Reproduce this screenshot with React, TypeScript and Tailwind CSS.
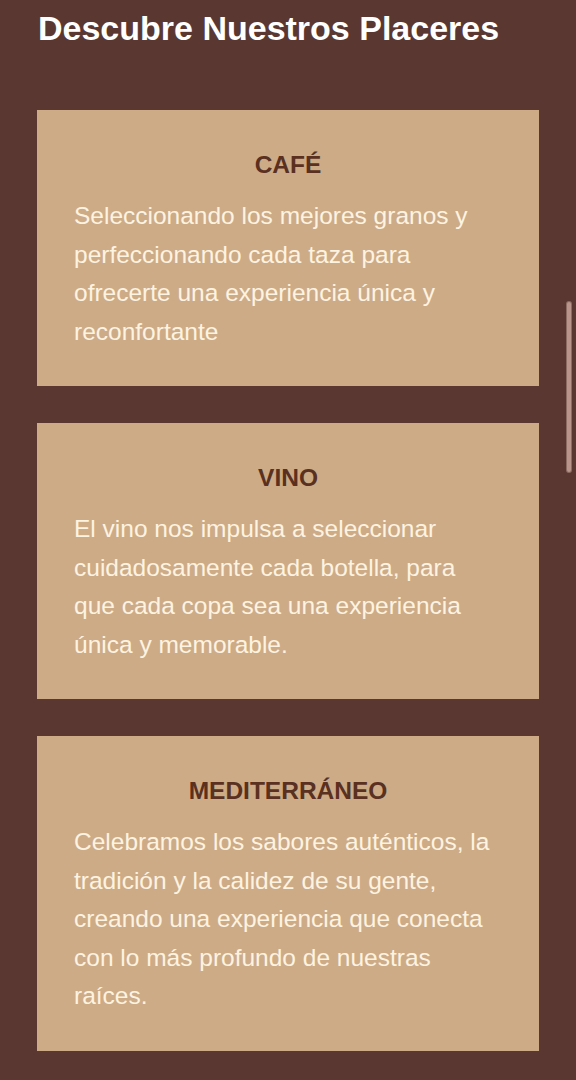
import React from 'react';

interface Placer {
  title: string;
  text: string;
}

const placeres: Placer[] = [
  {
    title: 'CAFÉ',
    text: 'Seleccionando los mejores granos y perfeccionando cada taza para ofrecerte una experiencia única y reconfortante',
  },
  {
    title: 'VINO',
    text: 'El vino nos impulsa a seleccionar cuidadosamente cada botella, para que cada copa sea una experiencia única y memorable.',
  },
  {
    title: 'MEDITERRÁNEO',
    text: 'Celebramos los sabores auténticos, la tradición y la calidez de su gente, creando una experiencia que conecta con lo más profundo de nuestras raíces.',
  },
];

const PlacerCard: React.FC<{ item: Placer }> = ({ item }) => (
  <div className="bg-[#cdab87] pt-[37px] pb-[35px] px-[37px]">
    <h3 className="text-center text-[24.5px] leading-[36px] font-bold text-[#5a3020] mb-[14px]">
      {item.title}
    </h3>
    <p className="text-[24.5px] leading-[38.5px] text-[#fdf3e1]">{item.text}</p>
  </div>
);

export default function App() {
  return (
    <div
      className="relative min-h-[1080px] bg-[#5a3731] px-[37px] pt-[8px] pb-[40px]"
      style={{ fontFamily: '"Liberation Sans", Arial, sans-serif' }}
    >
      <h2 className="text-[34px] leading-[40px] font-bold text-white pl-px mb-[62px]">
        Descubre Nuestros Placeres
      </h2>

      <div className="flex flex-col gap-[37px]">
        {placeres.map((p) => (
          <PlacerCard key={p.title} item={p} />
        ))}
      </div>

      {/* overlay scrollbar */}
      <div className="absolute left-[566px] top-[301px] w-[6px] h-[172px] rounded-full bg-[#b8948a] border border-[#4a2c27]/40" />
    </div>
  );
}
